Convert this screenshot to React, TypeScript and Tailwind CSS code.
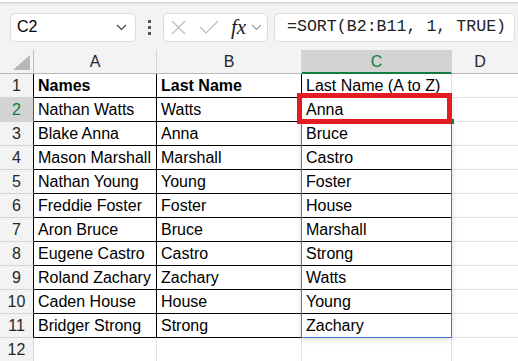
import React from 'react';

const rows: [string, string, string][] = [
  ['Nathan Watts', 'Watts', 'Anna'],
  ['Blake Anna', 'Anna', 'Bruce'],
  ['Mason Marshall', 'Marshall', 'Castro'],
  ['Nathan Young', 'Young', 'Foster'],
  ['Freddie Foster', 'Foster', 'House'],
  ['Aron Bruce', 'Bruce', 'Marshall'],
  ['Eugene Castro', 'Castro', 'Strong'],
  ['Roland Zachary', 'Zachary', 'Watts'],
  ['Caden House', 'House', 'Young'],
  ['Bridger Strong', 'Strong', 'Zachary'],
];

const cellText = 'px-[4px] pt-[3px] leading-[18px] text-[16px] text-black whitespace-nowrap overflow-hidden';

const RowHead = ({ n, active, table }: { n: number; active?: boolean; table?: boolean }) => (
  <div
    className={
      'h-[24px] border-b border-r border-b-[#d4d4d4] flex items-center justify-center text-[16px] leading-none ' +
      (active
        ? 'bg-[#d3d3d3] text-[#107c41] border-r-[#107c41]'
        : table
        ? 'bg-[#f3f3f3] text-[#262626] border-r-black'
        : 'bg-[#f3f3f3] text-[#262626] border-r-[#d4d4d4]')
    }
  >
    {n}
  </div>
);

const App = () => {
  return (
    <div className="w-[518px] h-[361px] overflow-hidden bg-[#f3f3f3] relative" style={{ fontFamily: '"Liberation Sans", Arial, sans-serif' }}>
      <div className="h-[3px] bg-white border-b border-[#d6d6d6] shadow-[0_1px_2px_rgba(0,0,0,0.08)]" />
      <div className="flex items-center h-[47px] pt-[1px]">
        <div className="ml-[10px] w-[126px] h-[29px] bg-white border border-[#dcdcdc] rounded-[5px] flex items-center justify-between pl-[6px] pr-[8px]">
          <span className="text-[16px] text-black">C2</span>
          <svg width="11" height="7" viewBox="0 0 11 7" fill="none" stroke="#444" strokeWidth="1.2">
            <path d="M1 1l4.5 4.5L10 1" />
          </svg>
        </div>
        <div className="w-[27px] flex flex-col items-center gap-[3px]">
          <span className="w-[3px] h-[3px] bg-[#555]" />
          <span className="w-[3px] h-[3px] bg-[#555]" />
          <span className="w-[3px] h-[3px] bg-[#555]" />
        </div>
        <div className="w-[105px] h-[29px] bg-white border border-[#dcdcdc] rounded-[5px] flex items-center pl-[7px]">
          <svg width="15" height="15" viewBox="0 0 15 15" stroke="#bdbdbd" strokeWidth="1.2">
            <path d="M1 1l13 13M14 1L1 14" />
          </svg>
          <svg className="ml-[13px]" width="20" height="14" viewBox="0 0 20 14" fill="none" stroke="#bdbdbd" strokeWidth="1.2">
            <path d="M1 7l6 6L19 1" />
          </svg>
          <span className="ml-[12px] text-[21px] italic text-[#222] leading-none" style={{ fontFamily: '"Liberation Serif", serif' }}>fx</span>
          <svg className="ml-[5px]" width="11" height="7" viewBox="0 0 11 7" fill="none" stroke="#999" strokeWidth="1.1">
            <path d="M1 1l4.5 4.5L10 1" />
          </svg>
        </div>
        <div className="ml-[6px] w-[241px] h-[29px] bg-white border border-[#dcdcdc] rounded-[5px] flex items-center pl-[12px]">
          <span className="text-[16.6px] text-[#222] whitespace-nowrap" style={{ fontFamily: '"Liberation Mono", monospace' }}>
            =SORT(B2:B11, 1, TRUE)
          </span>
        </div>
      </div>

      <div className="grid grid-cols-[34px_123px_145px_150px_1fr] bg-white">
        <div className="h-[24px] bg-[#f3f3f3] border-r border-b border-r-[#bdbdbd] border-b-[#b9b9b9] relative">
          <svg className="absolute right-[3px] bottom-[3px]" width="17" height="15" viewBox="0 0 17 15">
            <path d="M17 0V15H0Z" fill="#b7b7b7" />
          </svg>
        </div>
        <div className="h-[24px] bg-[#f3f3f3] border-r border-b border-r-[#d4d4d4] border-b-[#b9b9b9] flex items-center justify-center text-[16px] text-[#262626]">A</div>
        <div className="h-[24px] bg-[#f3f3f3] border-r border-b border-r-[#d4d4d4] border-b-[#b9b9b9] flex items-center justify-center text-[16px] text-[#262626]">B</div>
        <div className="h-[24px] bg-[#d3d3d3] border-r border-b-2 border-r-[#d4d4d4] border-b-[#107c41] flex items-center justify-center text-[16px] text-[#107c41] pt-[1px]">C</div>
        <div className="h-[24px] bg-[#f3f3f3] border-b border-b-[#b9b9b9] flex items-center justify-center text-[16px] text-[#262626] pr-[10px]">D</div>

        <RowHead n={1} table />
        <div className={'h-[24px] border-r border-b border-black font-bold ' + cellText}>Names</div>
        <div className={'h-[24px] border-r border-b border-black font-bold ' + cellText}>Last Name</div>
        <div className={'h-[24px] border-r border-b border-r-[#e1e1e1] border-b-black ' + cellText}>Last Name (A to Z)</div>
        <div className="h-[24px] border-b border-[#e1e1e1]" />

        {rows.map((r, i) => (
          <React.Fragment key={i}>
            <RowHead n={i + 2} active={i === 0} table />
            <div className={'h-[24px] border-r border-b border-black ' + cellText}>{r[0]}</div>
            <div className={'h-[24px] border-r border-b border-black ' + cellText}>{r[1]}</div>
            <div className={'h-[24px] border-r border-b border-r-[#4472c4] border-b-black ' + cellText}>{r[2]}</div>
            <div className="h-[24px] border-b border-[#e1e1e1]" />
          </React.Fragment>
        ))}

        <RowHead n={12} />
        <div className="h-[24px] border-r border-b border-[#e1e1e1]" />
        <div className="h-[24px] border-r border-b border-[#e1e1e1]" />
        <div className="h-[24px] border-r border-b border-[#e1e1e1]" />
        <div className="h-[24px] border-b border-[#e1e1e1]" />
      </div>

      {/* spill range outline */}
      <div className="absolute left-[301px] top-[97px] w-[151px] h-[241px] border border-[#4472c4] shadow-[0_2px_6px_rgba(0,0,0,0.12)] pointer-events-none" />
      {/* fill handle */}
      <div className="absolute left-[449px] top-[119px] w-[5px] h-[5px] bg-[#107c41]" />
      {/* red highlight */}
      <div className="absolute left-[297px] top-[93px] w-[155px] h-[31px] border-[5px] border-[#e51b24] pointer-events-none" />
    </div>
  );
};

export default App;
